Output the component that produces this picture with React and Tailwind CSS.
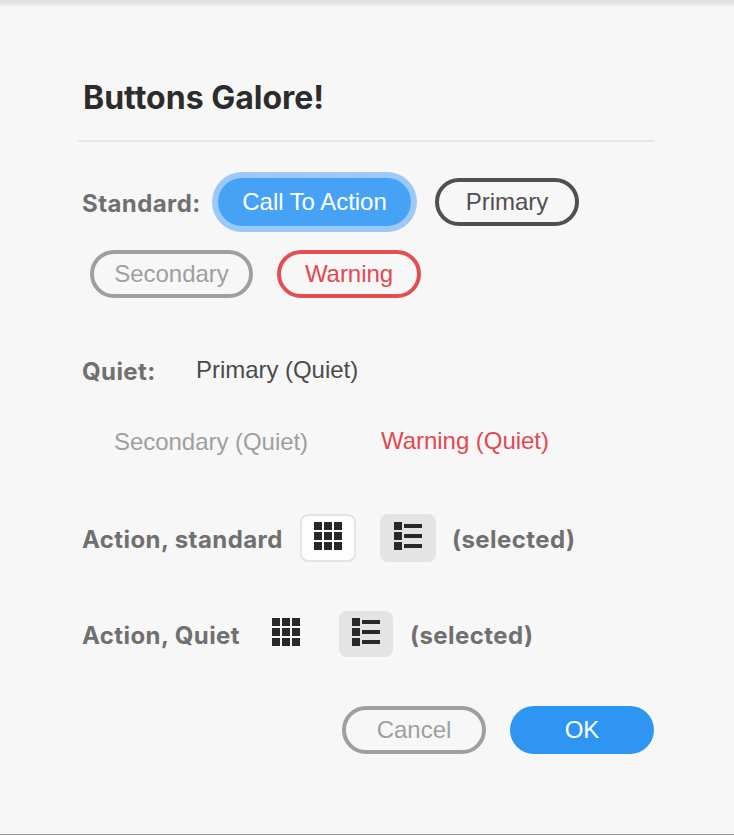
function Label({ className = "", children }) {
  return (
    <span className={`block shrink-0 whitespace-nowrap pt-[2px] font-['Inter',sans-serif] text-[24px] font-bold leading-[48px] tracking-[0.42px] text-[#707070] ${className}`}>
      {children}
    </span>
  );
}

function Pill({ className = "", children }) {
  return (
    <button className={`flex h-12 shrink-0 items-center justify-center whitespace-nowrap rounded-full text-[24px] leading-[40px] tracking-[-0.04px] ${className}`}>
      {children}
    </button>
  );
}

function Quiet({ className = "", children }) {
  return (
    <button className={`block h-12 shrink-0 whitespace-nowrap text-left text-[24px] leading-[48px] tracking-[-0.04px] ${className}`}>
      {children}
    </button>
  );
}

function GridIcon() {
  return (
    <svg width="28" height="28" viewBox="0 0 28 28" fill="#292929" shapeRendering="crispEdges">
      {[0, 10, 20].map((y) => [0, 10, 20].map((x) => <rect key={`${x}-${y}`} x={x} y={y} width="8" height="8" />))}
    </svg>
  );
}

function ListIcon() {
  return (
    <svg width="28" height="28" viewBox="0 0 28 28" fill="#292929" shapeRendering="crispEdges">
      {[0, 10, 20].map((y) => (
        <g key={y}>
          <rect y={y} width="8" height="8" />
          <rect x="10" y={y + 2} width="18" height="4" />
        </g>
      ))}
    </svg>
  );
}

export default function App() {
  return (
    <div className="flex h-[835px] w-[734px] flex-col overflow-hidden border-b border-[#999999] bg-[#f7f7f7] font-['Liberation_Sans',Arial,sans-serif]">
      <div className="h-1.5 shrink-0 bg-linear-to-b from-[#e2e2e2] from-50% to-[#f2f2f2]" />
      <main className="ml-[78px] w-[576px]">
        <h1 className="mt-[67px] h-[67px] border-b-2 border-[#e8e8e8] box-content pl-[5px] font-['Inter',sans-serif] text-[32px] font-bold leading-[50px] text-[#2c2c2c]">
          Buttons Galore!
        </h1>

        <div className="mt-9 flex h-12 pl-1">
          <Label className="w-[136px]">Standard:</Label>
          <Pill className="w-[193px] bg-[#45a2f5] text-white ring-6 ring-[#9dc9f8]">Call To Action</Pill>
          <Pill className="ml-6 w-36 border-4 border-[#505050] text-[#505050]">Primary</Pill>
        </div>
        <div className="mt-6 flex h-12 gap-6 pl-3">
          <Pill className="w-[163px] border-4 border-[#9f9f9f] text-[#9f9f9f]">Secondary</Pill>
          <Pill className="w-36 border-4 border-[#e34f51] text-[#e34850]">Warning</Pill>
        </div>

        <div className="mt-12 flex h-12 pl-1">
          <Label className="w-[114px]">Quiet:</Label>
          <Quiet className="text-[#4b4b4b]">Primary (Quiet)</Quiet>
        </div>
        <div className="mt-6 flex h-12 pl-9">
          <Quiet className="w-[267px] text-[#9f9f9f]">Secondary (Quiet)</Quiet>
          <Quiet className="-mt-px text-[#e34850]">Warning (Quiet)</Quiet>
        </div>

        <div className="mt-12 flex h-12 pl-1">
          <Label className="w-[218px]">Action, standard</Label>
          <button className="flex h-12 w-14 justify-center rounded-lg border-2 border-[#e4e4e4] bg-[#fdfdfd] pt-1.5"><GridIcon /></button>
          <button className="ml-6 flex h-12 w-14 justify-center rounded-lg bg-[#e4e4e4] pt-2"><ListIcon /></button>
          <Label className="ml-4">(selected)</Label>
        </div>
        <div className="mt-12 flex h-12 pl-1">
          <Label className="w-[190px]">Action, Quiet</Label>
          <button className="mt-2 h-7 w-7"><GridIcon /></button>
          <button className="ml-[39px] mt-px flex h-[46px] w-[54px] rounded-lg bg-[#e4e4e4] pl-[13px] pt-[7px]"><ListIcon /></button>
          <Label className="ml-[17px]">(selected)</Label>
        </div>

        <div className="mt-12 flex h-12 justify-end gap-6">
          <Pill className="w-36 border-4 border-[#9f9f9f] text-[#9f9f9f]">Cancel</Pill>
          <Pill className="w-36 bg-[#2e96f2] text-white">OK</Pill>
        </div>
      </main>
    </div>
  );
}
